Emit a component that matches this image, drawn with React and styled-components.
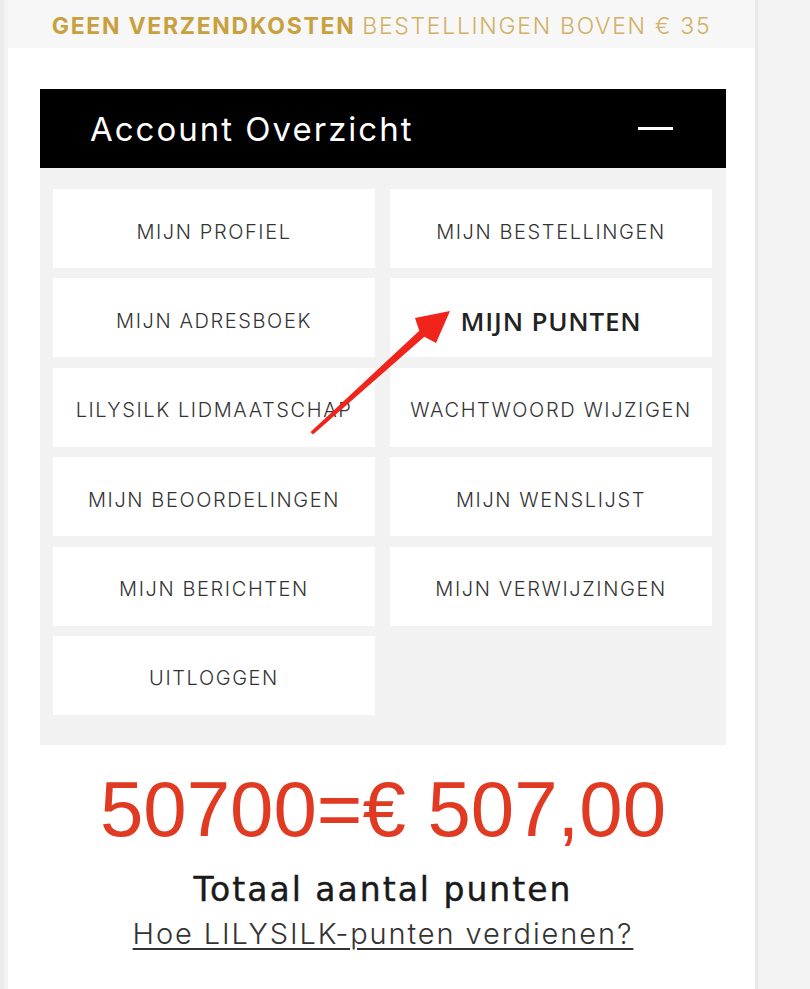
import React from 'react';
import styled, { createGlobalStyle } from 'styled-components';

const GlobalStyle = createGlobalStyle`
  html, body {
    margin: 0;
    padding: 0;
    background: #f5f5f5;
  }
  body {
    font-family: 'Inter', 'Liberation Sans', sans-serif;
    color: #333;
  }
`;

const menuItems = [
  'mijn profiel',
  'mijn bestellingen',
  'mijn adresboek',
  'mijn punten',
  'lilysilk lidmaatschap',
  'wachtwoord wijzigen',
  'mijn beoordelingen',
  'mijn wenslijst',
  'mijn berichten',
  'mijn verwijzingen',
  'uitloggen',
];

const App = () => {
  return (
    <>
      <GlobalStyle />
      <Screen>
        <Page>
          <Banner>
            <strong>Geen verzendkosten</strong> bestellingen boven € 35
          </Banner>
          <Content>
            <Accordion>
              <AccordionHead>
                <h2>Account Overzicht</h2>
                <Minus />
              </AccordionHead>
              <MenuGrid>
                {menuItems.map((item) => (
                  <MenuButton key={item} $active={item === 'mijn punten'}>
                    {item}
                  </MenuButton>
                ))}
              </MenuGrid>
            </Accordion>
            <Points>
              <h3 className="amount">50700=€ 507,00</h3>
              <p className="label">Totaal aantal punten</p>
              <a href="#punten" className="how">
                Hoe LILYSILK-punten verdienen?
              </a>
            </Points>
          </Content>
          {/* red annotation arrow drawn over the menu */}
          <Arrow viewBox="0 0 160 140" aria-hidden="true">
            <path
              d="M0.5 125 L109.3 23.8 L105 11 L140 4 L126 36 L114.3 29.7 L3 127.5 Z"
              fill="#f0241b"
            />
          </Arrow>
        </Page>
      </Screen>
    </>
  );
};

const Screen = styled.div`
  min-height: 989px;
  padding-left: 8px;
  background: #f3f3f3;
  box-shadow: inset 4px 0 0 #ececec;
`;

const Page = styled.main`
  position: relative;
  width: 750px;
  min-height: 989px;
  background: #fff;
  border-right: 3px solid #e9e9e9;
  box-sizing: border-box;
`;

const Banner = styled.div`
  height: 48px;
  padding-top: 3px;
  box-sizing: border-box;
  background: #f7f7f7;
  display: flex;
  align-items: center;
  justify-content: center;
  gap: 0.3em;
  font-size: 23px;
  letter-spacing: 1.7px;
  text-transform: uppercase;
  color: #d2b064;
  font-weight: 300;
  strong {
    font-weight: 700;
    color: #c8a03e;
  }
`;

const Content = styled.div`
  padding: 41px 29px 0 32px;
`;

const Accordion = styled.section`
  background: #f2f2f2;
  padding-bottom: 30px;
`;

const AccordionHead = styled.div`
  height: 79px;
  background: #000;
  display: flex;
  align-items: center;
  justify-content: space-between;
  padding: 0 53px 0 50px;
  h2 {
    margin: 0;
    color: #fff;
    font-size: 33px;
    letter-spacing: 2px;
    font-weight: 400;
  }
`;

const Minus = styled.span`
  width: 35px;
  height: 3px;
  background: #fff;
`;

const MenuGrid = styled.div`
  display: grid;
  grid-template-columns: 1fr 1fr;
  grid-auto-rows: 79px;
  gap: 10.4px 15px;
  padding: 21px 14px 0 13px;
`;

const MenuButton = styled.div`
  background: #fff;
  display: flex;
  align-items: center;
  justify-content: center;
  padding-top: 6px;
  box-sizing: border-box;
  text-transform: uppercase;
  white-space: nowrap;
  font-family: ${(p) => (p.$active ? "'Open Sans', sans-serif" : 'inherit')};
  font-size: ${(p) => (p.$active ? '26px' : '20px')};
  font-weight: ${(p) => (p.$active ? 600 : 300)};
  letter-spacing: ${(p) => (p.$active ? '0.8px' : '1.6px')};
  color: ${(p) => (p.$active ? '#222' : '#333')};
`;

const Points = styled.div`
  text-align: center;
  padding-top: 25px;
  .amount {
    margin: 0;
    font-family: 'Liberation Sans', Arial, sans-serif;
    font-weight: 400;
    font-size: 78px;
    line-height: 78px;
    color: #e03a22;
  }
  .label {
    margin: 22px 0 0;
    font-family: 'DejaVu Sans', sans-serif;
    font-size: 33px;
    letter-spacing: 2px;
    line-height: 40px;
    font-weight: 400;
    color: #1a1a1a;
    -webkit-text-stroke: 0.4px #1a1a1a;
  }
  .how {
    display: inline-block;
    margin-top: 6px;
    font-size: 29px;
    letter-spacing: 1.9px;
    font-weight: 300;
    color: #333;
    text-decoration: underline;
    text-underline-offset: 4px;
  }
`;

const Arrow = styled.svg`
  position: absolute;
  left: 302px;
  top: 307px;
  width: 160px;
  height: 140px;
  pointer-events: none;
`;

export default App;
